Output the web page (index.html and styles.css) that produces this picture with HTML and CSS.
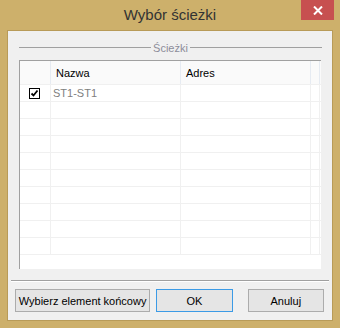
FILE: index.html
```html
<!DOCTYPE html>
<html lang="pl">
  <head>
    <meta charset="UTF-8" />
    <title>Wybór ścieżki</title>
    <link rel="stylesheet" href="styles.css">
  </head>
  <body>
    <div class="window">
      <div class="titlebar">
        <span class="title">Wybór ścieżki</span>
        <a class="close" href="#">
          <svg width="10" height="9" viewBox="0 0 10 9">
            <path d="M1 0.5 L9 8.5 M9 0.5 L1 8.5" stroke="#fff" stroke-width="2" fill="none" />
          </svg>
        </a>
      </div>
      <div class="client">
        <div class="group-head"><span>Ścieżki</span></div>
        <div class="grid">
          <div class="row head">
            <div class="cell c1"></div>
            <div class="cell c2">Nazwa</div>
            <div class="cell c3">Adres</div>
            <div class="cell c4"></div>
          </div>
          <div class="row">
            <div class="cell c1"><span class="check">
              <svg width="9" height="9" viewBox="0 0 9 9">
                <path d="M1.5 4.5 L3.5 6.5 L7.5 1.5" stroke="#000" stroke-width="1.8" fill="none" />
              </svg>
            </span></div>
            <div class="cell c2 muted">ST1-ST1</div>
            <div class="cell c3"></div>
            <div class="cell c4"></div>
          </div>
          <div class="row"><div class="cell c1"></div><div class="cell c2"></div><div class="cell c3"></div><div class="cell c4"></div></div>
          <div class="row"><div class="cell c1"></div><div class="cell c2"></div><div class="cell c3"></div><div class="cell c4"></div></div>
          <div class="row"><div class="cell c1"></div><div class="cell c2"></div><div class="cell c3"></div><div class="cell c4"></div></div>
          <div class="row"><div class="cell c1"></div><div class="cell c2"></div><div class="cell c3"></div><div class="cell c4"></div></div>
          <div class="row"><div class="cell c1"></div><div class="cell c2"></div><div class="cell c3"></div><div class="cell c4"></div></div>
          <div class="row"><div class="cell c1"></div><div class="cell c2"></div><div class="cell c3"></div><div class="cell c4"></div></div>
          <div class="row"><div class="cell c1"></div><div class="cell c2"></div><div class="cell c3"></div><div class="cell c4"></div></div>
          <div class="row"><div class="cell c1"></div><div class="cell c2"></div><div class="cell c3"></div><div class="cell c4"></div></div>
          <div class="row"><div class="cell c1"></div><div class="cell c2"></div><div class="cell c3"></div><div class="cell c4"></div></div>
        </div>
        <div class="separator"></div>
        <div class="buttons">
          <button class="btn wide">Wybierz element końcowy</button>
          <button class="btn default">OK</button>
          <button class="btn">Anuluj</button>
        </div>
      </div>
    </div>
  </body>
</html>
```

FILE: styles.css
```css
body {
  margin: 0;
  padding: 0;
  background: #cdb06b;
  font-family: "Liberation Sans", Arial, sans-serif;
  font-size: 11px;
}
.window {
  width: 340px;
  height: 328px;
  display: flex;
  flex-direction: column;
  background: #cdb06b;
}
.titlebar {
  height: 30px;
  position: relative;
  text-align: center;
}
.title {
  display: inline-block;
  line-height: 29px;
  font-size: 15px;
  color: #333;
}
.close {
  position: absolute;
  top: 0;
  right: 6px;
  width: 33px;
  height: 20px;
  background: #c75050;
  display: flex;
  align-items: center;
  justify-content: center;
}
.client {
  flex: 1;
  margin: 0 7px 7px 7px;
  border: 1px solid #b89b58;
  background: #f0f0f0;
  display: flex;
  flex-direction: column;
}
.group-head {
  margin: 9px 10px 0 11px;
  height: 15px;
  display: flex;
  align-items: center;
  gap: 2px;
  color: #8d8d9a;
}
.group-head::before,
.group-head::after {
  content: "";
  flex: 1;
  height: 1px;
  background: #a0a0a0;
}
.grid {
  margin: 5px 0 0 11px;
  width: 301px;
  height: 208px;
  background: #fff;
  border-top: 1px solid #a0a0a0;
  border-left: 1px solid #a0a0a0;
  overflow: hidden;
}
.row {
  display: flex;
  height: 16px;
  border-bottom: 1px solid #f0f0f0;
}
.row.head {
  height: 23px;
  background: #fafafa;
}
.cell {
  border-right: 1px solid #f0f0f0;
  padding-left: 5px;
  display: flex;
  align-items: center;
  box-sizing: border-box;
}
.head .cell {
  border-right-color: #e6ebf2;
  color: #000;
}
.c1 {
  width: 31px;
  padding-left: 9px;
}
.c2,
.c3 {
  width: 130px;
}
.c2 {
  padding-left: 2px;
}
.head .c2 {
  padding-left: 5px;
}
.c4 {
  width: 9px;
  padding: 0;
}
.muted {
  color: #808080;
}
.check {
  width: 11px;
  height: 11px;
  box-sizing: border-box;
  border: 1px solid #000;
  display: flex;
  align-items: center;
  justify-content: center;
}
.separator {
  margin: 11px 3px 0 3px;
  height: 1px;
  background: #a0a0a0;
  border-bottom: 1px solid #fff;
}
.buttons {
  margin: 7px 8px 0 7px;
  display: flex;
}
.btn {
  height: 23px;
  width: 78px;
  margin: 0 0 0 6px;
  padding: 0;
  border: 1px solid #acacac;
  background: #e5e5e5;
  font-family: "Liberation Sans", Arial, sans-serif;
  font-size: 11px;
  color: #000;
}
.btn.wide {
  width: 138px;
  margin: 0;
}
.btn.default {
  border-color: #3c9be6;
  margin-right: 9px;
}
```
